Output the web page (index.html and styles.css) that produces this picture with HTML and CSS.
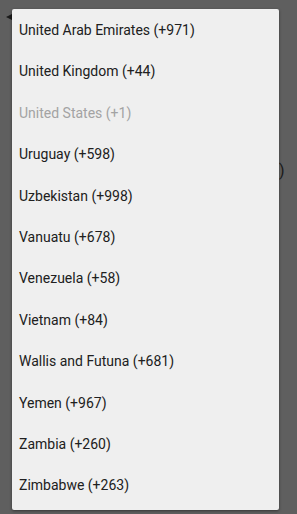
FILE: index.html
```html
<!DOCTYPE html>
<html>
<head>
    <link rel="stylesheet" href="styles.css">
    <title>Country code</title>
</head>
<body>
    <div class="screen">
        <span class="backArrow"></span>
        <span class="behindParen">)</span>
        <ul class="menu">
            <li class="item">United Arab Emirates (+971)</li>
            <li class="item">United Kingdom (+44)</li>
            <li class="item disabled">United States (+1)</li>
            <li class="item">Uruguay (+598)</li>
            <li class="item">Uzbekistan (+998)</li>
            <li class="item">Vanuatu (+678)</li>
            <li class="item">Venezuela (+58)</li>
            <li class="item">Vietnam (+84)</li>
            <li class="item">Wallis and Futuna (+681)</li>
            <li class="item">Yemen (+967)</li>
            <li class="item">Zambia (+260)</li>
            <li class="item">Zimbabwe (+263)</li>
        </ul>
    </div>
</body>
</html>
```

FILE: styles.css
```css
*{
    margin: 0px;
    padding: 0px;
    box-sizing: border-box;
}
body{
    background-color: #5f5f5f;
    font-family: Roboto, "Noto Sans", sans-serif;
}
.screen{
    position: relative;
    width: 297px;
    height: 514px;
    padding: 9px 18px 0px 12px;
}
.backArrow{
    position: absolute;
    left: 6px;
    top: 14px;
    width: 0;
    height: 0;
    border-top: 3px solid transparent;
    border-bottom: 3px solid transparent;
    border-right: 6px solid #1a1a1a;
}
.behindParen{
    position: absolute;
    left: 279px;
    top: 161px;
    font-size: 16px;
    color: #1a1a1a;
}
.menu{
    position: relative;
    list-style: none;
    background-color: #efefef;
    height: 501px;
    padding-top: 1px;
    border-radius: 2px;
    box-shadow: 0px 1px 3px rgba(0,0,0,0.45);
}
.item{
    height: 41.4px;
    line-height: 41.4px;
    padding-left: 7px;
    font-size: 14px;
    color: #202020;
    white-space: nowrap;
}
.disabled{
    color: #a3a3a3;
}
```
